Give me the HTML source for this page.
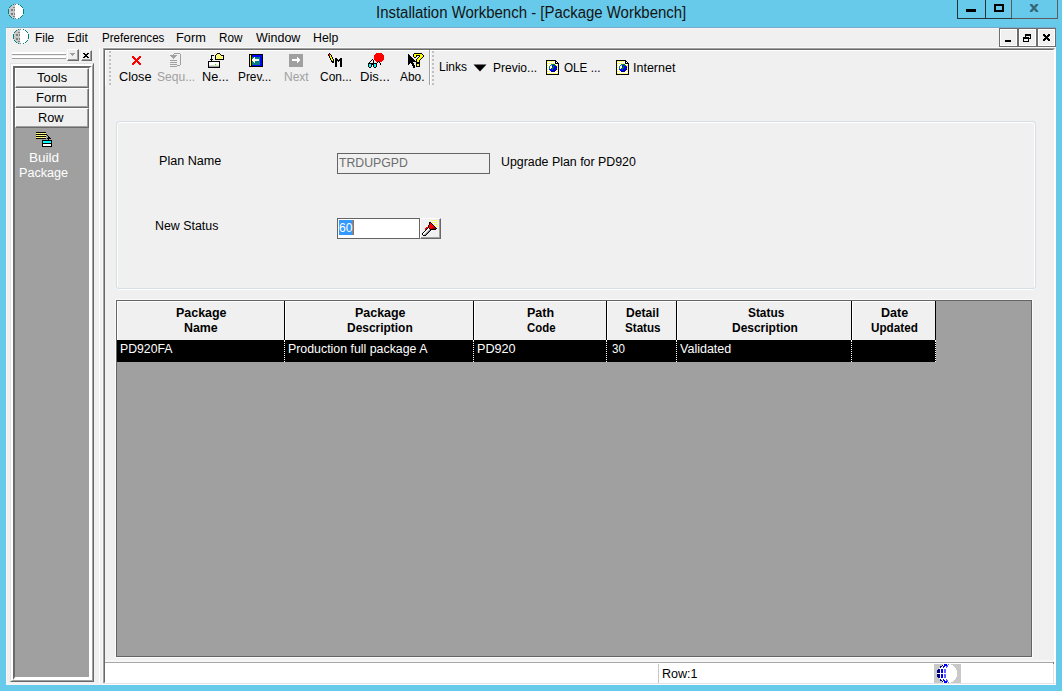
<!DOCTYPE html>
<html>
<head>
<meta charset="utf-8">
<title>Installation Workbench - [Package Workbench]</title>
<style>
html,body{margin:0;padding:0;}
body{width:1062px;height:691px;overflow:hidden;background:#67caea;position:relative;font-family:"Liberation Sans",sans-serif;font-size:12px;color:#000;}
.a{position:absolute;}
.t{position:absolute;white-space:nowrap;line-height:14px;font-size:12px;transform-origin:0 0;}
#client{left:6px;top:27px;width:1050px;height:658px;background:#f0f0f0;}
.title{font-size:16px;line-height:20px;color:#141414;}
.m{font-size:12px;}
.dis{color:#a0a0a0;}
.hdr{position:absolute;top:301px;height:39px;background:#f0f0f0;border-right:1px solid #000;box-sizing:border-box;box-shadow:inset 1px 1px 0 #fff;}
.hb{font-weight:bold;}
.cell{position:absolute;top:340px;height:22px;background:#000;border-right:1px dotted #fff;box-sizing:border-box;}
.sbtn{position:absolute;left:15px;width:74px;height:20px;background:#f0f0f0;border:1px solid;border-color:#fff #696969 #696969 #fff;box-sizing:border-box;box-shadow:inset -1px -1px 0 #a0a0a0;}
.mdib{top:28px;width:19px;height:19px;box-sizing:border-box;border:1px solid #6d6d6d;background:#f0f0f0;box-shadow:inset 0 0 0 1px #fff;}
.grip{width:2px;background:repeating-linear-gradient(to bottom,#c0c0c0 0,#c0c0c0 2px,#f0f0f0 2px,#f0f0f0 4px);}
</style>
</head>
<body>
<!-- title bar -->
<svg class="a" style="left:8px;top:4px" width="16" height="15" viewBox="0 0 16 15" shape-rendering="crispEdges"><rect x="5" y="0" width="1" height="1" fill="#008080"/><rect x="6" y="0" width="1" height="1" fill="#c8c8c8"/><rect x="7" y="0" width="1" height="1" fill="#808080"/><rect x="8" y="0" width="2" height="1" fill="#fff"/><rect x="10" y="0" width="1" height="1" fill="#008080"/><rect x="3" y="1" width="1" height="1" fill="#008080"/><rect x="4" y="1" width="3" height="1" fill="#c8c8c8"/><rect x="7" y="1" width="5" height="1" fill="#fff"/><rect x="12" y="1" width="1" height="1" fill="#008080"/><rect x="2" y="2" width="1" height="1" fill="#008080"/><rect x="3" y="2" width="4" height="1" fill="#c8c8c8"/><rect x="7" y="2" width="6" height="1" fill="#fff"/><rect x="13" y="2" width="1" height="1" fill="#008080"/><rect x="1" y="3" width="1" height="1" fill="#008080"/><rect x="2" y="3" width="3" height="1" fill="#c8c8c8"/><rect x="5" y="3" width="2" height="1" fill="#808080"/><rect x="7" y="3" width="7" height="1" fill="#fff"/><rect x="14" y="3" width="1" height="1" fill="#008080"/><rect x="1" y="4" width="6" height="1" fill="#c8c8c8"/><rect x="7" y="4" width="8" height="1" fill="#fff"/><rect x="0" y="5" width="1" height="1" fill="#008080"/><rect x="1" y="5" width="2" height="1" fill="#c8c8c8"/><rect x="3" y="5" width="2" height="1" fill="#808080"/><rect x="5" y="5" width="1" height="1" fill="#c8c8c8"/><rect x="6" y="5" width="1" height="1" fill="#808080"/><rect x="7" y="5" width="8" height="1" fill="#fff"/><rect x="15" y="5" width="1" height="1" fill="#008080"/><rect x="0" y="6" width="1" height="1" fill="#008080"/><rect x="1" y="6" width="2" height="1" fill="#c8c8c8"/><rect x="3" y="6" width="2" height="1" fill="#808080"/><rect x="5" y="6" width="1" height="1" fill="#c8c8c8"/><rect x="6" y="6" width="1" height="1" fill="#808080"/><rect x="7" y="6" width="8" height="1" fill="#fff"/><rect x="15" y="6" width="1" height="1" fill="#008080"/><rect x="0" y="7" width="1" height="1" fill="#008080"/><rect x="1" y="7" width="6" height="1" fill="#c8c8c8"/><rect x="7" y="7" width="8" height="1" fill="#fff"/><rect x="15" y="7" width="1" height="1" fill="#008080"/><rect x="0" y="8" width="1" height="1" fill="#008080"/><rect x="1" y="8" width="6" height="1" fill="#c8c8c8"/><rect x="7" y="8" width="8" height="1" fill="#fff"/><rect x="15" y="8" width="1" height="1" fill="#008080"/><rect x="0" y="9" width="1" height="1" fill="#008080"/><rect x="1" y="9" width="2" height="1" fill="#c8c8c8"/><rect x="3" y="9" width="2" height="1" fill="#808080"/><rect x="5" y="9" width="1" height="1" fill="#c8c8c8"/><rect x="6" y="9" width="1" height="1" fill="#808080"/><rect x="7" y="9" width="8" height="1" fill="#fff"/><rect x="15" y="9" width="1" height="1" fill="#008080"/><rect x="1" y="10" width="2" height="1" fill="#c8c8c8"/><rect x="3" y="10" width="2" height="1" fill="#808080"/><rect x="5" y="10" width="1" height="1" fill="#c8c8c8"/><rect x="6" y="10" width="1" height="1" fill="#808080"/><rect x="7" y="10" width="8" height="1" fill="#fff"/><rect x="1" y="11" width="1" height="1" fill="#008080"/><rect x="2" y="11" width="5" height="1" fill="#c8c8c8"/><rect x="7" y="11" width="7" height="1" fill="#fff"/><rect x="14" y="11" width="1" height="1" fill="#008080"/><rect x="2" y="12" width="1" height="1" fill="#008080"/><rect x="3" y="12" width="2" height="1" fill="#c8c8c8"/><rect x="5" y="12" width="2" height="1" fill="#808080"/><rect x="7" y="12" width="6" height="1" fill="#fff"/><rect x="13" y="12" width="1" height="1" fill="#008080"/><rect x="3" y="13" width="1" height="1" fill="#008080"/><rect x="4" y="13" width="3" height="1" fill="#c8c8c8"/><rect x="7" y="13" width="5" height="1" fill="#fff"/><rect x="12" y="13" width="1" height="1" fill="#008080"/><rect x="5" y="14" width="1" height="1" fill="#008080"/><rect x="6" y="14" width="1" height="1" fill="#c8c8c8"/><rect x="7" y="14" width="1" height="1" fill="#808080"/><rect x="8" y="14" width="2" height="1" fill="#fff"/><rect x="10" y="14" width="1" height="1" fill="#008080"/></svg>
<!-- caption buttons -->
<div class="a" style="left:957px;top:0;width:101px;height:19px;border:1px solid #5c5c5c;border-top:none;box-sizing:border-box;"></div>
<div class="a" style="left:957px;top:0;width:55px;height:19px;border:1px solid #26343a;border-top:none;border-right:none;box-sizing:border-box;"></div>
<div class="a" style="left:985px;top:0;width:1px;height:19px;background:#26343a"></div>
<div class="a" style="left:1011px;top:0;width:1px;height:18px;background:#5c5c5c"></div>
<div class="a" style="left:966px;top:9px;width:10px;height:3px;background:#000"></div>
<div class="a" style="left:994px;top:4px;width:10px;height:8px;border:2px solid #000;box-sizing:border-box;"></div>
<svg class="a" style="left:1029px;top:4px" width="10" height="8" viewBox="0 0 10 8"><path d="M1.400 0L8.600 8M8.600 0L1.400 8" stroke="#36697b" stroke-width="2.500" fill="none"/></svg>
<div id="client" class="a"></div>
<div class="a" style="left:6px;top:27px;width:1050px;height:1px;background:#74adcc"></div>
<div class="a" style="left:6px;top:28px;width:1050px;height:1px;background:#f8f6f4"></div>
<div class="a" style="left:6px;top:28px;width:1px;height:657px;background:#f8f6f4"></div>
<!-- menu bar -->
<svg class="a" style="left:13px;top:29px" width="16" height="15" viewBox="0 0 16 15" shape-rendering="crispEdges"><rect x="5" y="0" width="1" height="1" fill="#008080"/><rect x="6" y="0" width="1" height="1" fill="#c8c8c8"/><rect x="7" y="0" width="1" height="1" fill="#808080"/><rect x="8" y="0" width="2" height="1" fill="#fff"/><rect x="10" y="0" width="1" height="1" fill="#008080"/><rect x="3" y="1" width="1" height="1" fill="#008080"/><rect x="4" y="1" width="3" height="1" fill="#c8c8c8"/><rect x="7" y="1" width="5" height="1" fill="#fff"/><rect x="12" y="1" width="1" height="1" fill="#008080"/><rect x="2" y="2" width="1" height="1" fill="#008080"/><rect x="3" y="2" width="4" height="1" fill="#c8c8c8"/><rect x="7" y="2" width="6" height="1" fill="#fff"/><rect x="13" y="2" width="1" height="1" fill="#008080"/><rect x="1" y="3" width="1" height="1" fill="#008080"/><rect x="2" y="3" width="3" height="1" fill="#c8c8c8"/><rect x="5" y="3" width="2" height="1" fill="#808080"/><rect x="7" y="3" width="7" height="1" fill="#fff"/><rect x="14" y="3" width="1" height="1" fill="#008080"/><rect x="1" y="4" width="6" height="1" fill="#c8c8c8"/><rect x="7" y="4" width="8" height="1" fill="#fff"/><rect x="0" y="5" width="1" height="1" fill="#008080"/><rect x="1" y="5" width="2" height="1" fill="#c8c8c8"/><rect x="3" y="5" width="2" height="1" fill="#808080"/><rect x="5" y="5" width="1" height="1" fill="#c8c8c8"/><rect x="6" y="5" width="1" height="1" fill="#808080"/><rect x="7" y="5" width="8" height="1" fill="#fff"/><rect x="15" y="5" width="1" height="1" fill="#008080"/><rect x="0" y="6" width="1" height="1" fill="#008080"/><rect x="1" y="6" width="2" height="1" fill="#c8c8c8"/><rect x="3" y="6" width="2" height="1" fill="#808080"/><rect x="5" y="6" width="1" height="1" fill="#c8c8c8"/><rect x="6" y="6" width="1" height="1" fill="#808080"/><rect x="7" y="6" width="8" height="1" fill="#fff"/><rect x="15" y="6" width="1" height="1" fill="#008080"/><rect x="0" y="7" width="1" height="1" fill="#008080"/><rect x="1" y="7" width="6" height="1" fill="#c8c8c8"/><rect x="7" y="7" width="8" height="1" fill="#fff"/><rect x="15" y="7" width="1" height="1" fill="#008080"/><rect x="0" y="8" width="1" height="1" fill="#008080"/><rect x="1" y="8" width="6" height="1" fill="#c8c8c8"/><rect x="7" y="8" width="8" height="1" fill="#fff"/><rect x="15" y="8" width="1" height="1" fill="#008080"/><rect x="0" y="9" width="1" height="1" fill="#008080"/><rect x="1" y="9" width="2" height="1" fill="#c8c8c8"/><rect x="3" y="9" width="2" height="1" fill="#808080"/><rect x="5" y="9" width="1" height="1" fill="#c8c8c8"/><rect x="6" y="9" width="1" height="1" fill="#808080"/><rect x="7" y="9" width="8" height="1" fill="#fff"/><rect x="15" y="9" width="1" height="1" fill="#008080"/><rect x="1" y="10" width="2" height="1" fill="#c8c8c8"/><rect x="3" y="10" width="2" height="1" fill="#808080"/><rect x="5" y="10" width="1" height="1" fill="#c8c8c8"/><rect x="6" y="10" width="1" height="1" fill="#808080"/><rect x="7" y="10" width="8" height="1" fill="#fff"/><rect x="1" y="11" width="1" height="1" fill="#008080"/><rect x="2" y="11" width="5" height="1" fill="#c8c8c8"/><rect x="7" y="11" width="7" height="1" fill="#fff"/><rect x="14" y="11" width="1" height="1" fill="#008080"/><rect x="2" y="12" width="1" height="1" fill="#008080"/><rect x="3" y="12" width="2" height="1" fill="#c8c8c8"/><rect x="5" y="12" width="2" height="1" fill="#808080"/><rect x="7" y="12" width="6" height="1" fill="#fff"/><rect x="13" y="12" width="1" height="1" fill="#008080"/><rect x="3" y="13" width="1" height="1" fill="#008080"/><rect x="4" y="13" width="3" height="1" fill="#c8c8c8"/><rect x="7" y="13" width="5" height="1" fill="#fff"/><rect x="12" y="13" width="1" height="1" fill="#008080"/><rect x="5" y="14" width="1" height="1" fill="#008080"/><rect x="6" y="14" width="1" height="1" fill="#c8c8c8"/><rect x="7" y="14" width="1" height="1" fill="#808080"/><rect x="8" y="14" width="2" height="1" fill="#fff"/><rect x="10" y="14" width="1" height="1" fill="#008080"/></svg>
<!-- MDI child buttons -->
<div class="a mdib" style="left:999px"></div>
<div class="a mdib" style="left:1018px"></div>
<div class="a mdib" style="left:1037px"></div>
<div class="a" style="left:1005px;top:40px;width:6px;height:2px;background:#000"></div>
<svg class="a" style="left:1023px;top:34px" width="8" height="8" viewBox="0 0 8 8" shape-rendering="crispEdges"><rect x="2" y="0" width="6" height="2" fill="#000"/><rect x="7" y="0" width="1" height="5" fill="#000"/><rect x="6" y="4" width="2" height="1" fill="#000"/><rect x="2" y="0" width="1" height="3" fill="#000"/><rect x="0" y="3" width="6" height="2" fill="#000"/><rect x="0" y="3" width="1" height="5" fill="#000"/><rect x="5" y="3" width="1" height="5" fill="#000"/><rect x="0" y="7" width="6" height="1" fill="#000"/></svg>
<svg class="a" style="left:1043px;top:34px" width="7" height="7" viewBox="0 0 7 7" shape-rendering="crispEdges"><rect x="0" y="0" width="2" height="1" fill="#000"/><rect x="5" y="0" width="2" height="1" fill="#000"/><rect x="0" y="1" width="3" height="1" fill="#000"/><rect x="4" y="1" width="3" height="1" fill="#000"/><rect x="1" y="2" width="5" height="1" fill="#000"/><rect x="2" y="3" width="3" height="1" fill="#000"/><rect x="1" y="4" width="5" height="1" fill="#000"/><rect x="0" y="5" width="3" height="1" fill="#000"/><rect x="4" y="5" width="3" height="1" fill="#000"/><rect x="0" y="6" width="2" height="1" fill="#000"/><rect x="5" y="6" width="2" height="1" fill="#000"/></svg>
<!-- left toolbar gripper -->
<div class="a" style="left:12px;top:52px;width:54px;height:2px;background:#fff"></div>
<div class="a" style="left:12px;top:54px;width:54px;height:1px;background:#a0a0a0"></div>
<div class="a" style="left:12px;top:56px;width:54px;height:2px;background:#fff"></div>
<div class="a" style="left:12px;top:58px;width:54px;height:1px;background:#a0a0a0"></div>
<div class="a" style="left:67px;top:49px;width:12px;height:12px;box-sizing:border-box;border:1px solid;border-color:#fff #696969 #696969 #fff;background:#f0f0f0;box-shadow:inset -1px -1px 0 #a0a0a0"></div>
<svg class="a" style="left:70px;top:53px" width="5" height="3" viewBox="0 0 5 3" shape-rendering="crispEdges"><rect x="0" y="0" width="5" height="1" fill="#a0a0a0"/><rect x="1" y="1" width="3" height="1" fill="#a0a0a0"/><rect x="2" y="2" width="1" height="1" fill="#a0a0a0"/></svg>
<div class="a" style="left:81px;top:50px;width:11px;height:11px;box-sizing:border-box;border:1px solid;border-color:#fff #696969 #696969 #fff;background:#f0f0f0;box-shadow:inset -1px -1px 0 #a0a0a0"></div>
<svg class="a" style="left:83px;top:53px" width="6" height="5" viewBox="0 0 6 5" shape-rendering="crispEdges"><rect x="0" y="0" width="2" height="1" fill="#000"/><rect x="4" y="0" width="2" height="1" fill="#000"/><rect x="1" y="1" width="4" height="1" fill="#000"/><rect x="2" y="2" width="2" height="1" fill="#000"/><rect x="1" y="3" width="4" height="1" fill="#000"/><rect x="0" y="4" width="2" height="1" fill="#000"/><rect x="4" y="4" width="2" height="1" fill="#000"/></svg>
<!-- side panel -->
<div class="a" style="left:10px;top:63px;width:84px;height:619px;box-sizing:border-box;border:1px solid;border-color:#e3e3e3 #696969 #696969 #e3e3e3;background:#f0f0f0"></div>
<div class="a" style="left:11px;top:64px;width:82px;height:617px;box-sizing:border-box;border:2px solid;border-color:#fff #a0a0a0 #a0a0a0 #fff;border-right-width:1px;border-bottom-width:1px;background:#f0f0f0"></div>
<div class="a" style="left:13px;top:66px;width:79px;height:614px;box-sizing:border-box;border:2px solid;border-color:#696969 #fff #fff #696969;border-right-width:3px;border-bottom-width:3px;background:#a0a0a0"></div>
<div class="sbtn" style="top:68px"></div>
<div class="sbtn" style="top:88px"></div>
<div class="sbtn" style="top:108px"></div>
<svg class="a" style="left:36px;top:132px" width="16" height="15" viewBox="0 0 16 15" shape-rendering="crispEdges"><rect x="0" y="0" width="10" height="1" fill="#000"/><rect x="0" y="1" width="1" height="1" fill="#ffff00"/><rect x="1" y="1" width="1" height="1" fill="#fff"/><rect x="2" y="1" width="1" height="1" fill="#ffff00"/><rect x="3" y="1" width="1" height="1" fill="#fff"/><rect x="4" y="1" width="1" height="1" fill="#ffff00"/><rect x="5" y="1" width="1" height="1" fill="#fff"/><rect x="6" y="1" width="1" height="1" fill="#ffff00"/><rect x="7" y="1" width="1" height="1" fill="#fff"/><rect x="8" y="1" width="1" height="1" fill="#ffff00"/><rect x="9" y="1" width="1" height="1" fill="#fff"/><rect x="0" y="2" width="11" height="1" fill="#000"/><rect x="0" y="3" width="1" height="1" fill="#ffff00"/><rect x="1" y="3" width="1" height="1" fill="#fff"/><rect x="2" y="3" width="1" height="1" fill="#ffff00"/><rect x="3" y="3" width="1" height="1" fill="#fff"/><rect x="4" y="3" width="1" height="1" fill="#ffff00"/><rect x="5" y="3" width="1" height="1" fill="#fff"/><rect x="6" y="3" width="1" height="1" fill="#ffff00"/><rect x="7" y="3" width="1" height="1" fill="#fff"/><rect x="8" y="3" width="1" height="1" fill="#ffff00"/><rect x="9" y="3" width="1" height="1" fill="#fff"/><rect x="11" y="3" width="1" height="1" fill="#000"/><rect x="0" y="4" width="10" height="1" fill="#000"/><rect x="12" y="4" width="1" height="1" fill="#000"/><rect x="0" y="5" width="1" height="1" fill="#ffff00"/><rect x="1" y="5" width="1" height="1" fill="#fff"/><rect x="2" y="5" width="1" height="1" fill="#ffff00"/><rect x="3" y="5" width="1" height="1" fill="#fff"/><rect x="4" y="5" width="1" height="1" fill="#ffff00"/><rect x="5" y="5" width="1" height="1" fill="#fff"/><rect x="6" y="5" width="1" height="1" fill="#ffff00"/><rect x="7" y="5" width="1" height="1" fill="#fff"/><rect x="8" y="5" width="1" height="1" fill="#ffff00"/><rect x="9" y="5" width="1" height="1" fill="#fff"/><rect x="12" y="5" width="2" height="1" fill="#000"/><rect x="0" y="6" width="10" height="1" fill="#000"/><rect x="11" y="6" width="4" height="1" fill="#000"/><rect x="12" y="7" width="1" height="1" fill="#000"/><rect x="6" y="8" width="10" height="1" fill="#000"/><rect x="6" y="9" width="1" height="1" fill="#000"/><rect x="7" y="9" width="8" height="1" fill="#00ffff"/><rect x="15" y="9" width="1" height="1" fill="#000"/><rect x="6" y="10" width="1" height="1" fill="#000"/><rect x="7" y="10" width="8" height="1" fill="#00ffff"/><rect x="15" y="10" width="1" height="1" fill="#000"/><rect x="6" y="11" width="10" height="1" fill="#000"/><rect x="6" y="12" width="1" height="1" fill="#000"/><rect x="7" y="12" width="8" height="1" fill="#fff"/><rect x="15" y="12" width="1" height="1" fill="#000"/><rect x="6" y="13" width="1" height="1" fill="#000"/><rect x="7" y="13" width="8" height="1" fill="#fff"/><rect x="15" y="13" width="1" height="1" fill="#000"/><rect x="6" y="14" width="10" height="1" fill="#000"/></svg>
<!-- splitter highlight -->
<div class="a" style="left:99px;top:48px;width:1px;height:636px;background:#fff"></div>
<div class="a" style="left:102px;top:48px;width:1px;height:636px;background:#f8f8f8"></div>
<!-- MDI client border -->
<div class="a" style="left:103px;top:47px;width:953px;height:1px;background:#fafafa"></div>
<div class="a" style="left:103px;top:48px;width:952px;height:636px;box-sizing:border-box;border:1px solid;border-color:#a0a0a0 transparent transparent #a0a0a0"></div>
<div class="a" style="left:104px;top:49px;width:950px;height:634px;box-sizing:border-box;border:1px solid;border-color:#696969 transparent transparent #696969"></div>
<div class="a" style="left:105px;top:50px;width:949px;height:1px;background:#fff"></div>
<div class="a" style="left:105px;top:50px;width:1px;height:36px;background:#fff"></div>
<div class="a" style="left:1054px;top:50px;width:2px;height:634px;background:#fff"></div>
<div class="a" style="left:6px;top:683px;width:1050px;height:2px;background:#f4f4f4"></div>
<div class="a" style="left:103px;top:683px;width:952px;height:1px;background:#e3e3e3"></div>
<div class="a" style="left:103px;top:684px;width:953px;height:1px;background:#fff"></div>
<div class="a" style="left:1053px;top:663px;width:1px;height:21px;background:#e3e3e3"></div>
<!-- toolbar -->
<div class="a grip" style="left:109px;top:51px;height:34px"></div>
<div class="a" style="left:429px;top:50px;width:1px;height:35px;background:#a0a0a0"></div>
<div class="a" style="left:430px;top:50px;width:1px;height:35px;background:#fff"></div>
<div class="a grip" style="left:432px;top:51px;height:34px"></div>
<svg class="a" style="left:132px;top:56px" width="9" height="9" viewBox="0 0 9 9" shape-rendering="crispEdges"><rect x="0" y="0" width="2" height="1" fill="#ff0000"/><rect x="7" y="0" width="2" height="1" fill="#ff0000"/><rect x="0" y="1" width="3" height="1" fill="#ff0000"/><rect x="6" y="1" width="3" height="1" fill="#ff0000"/><rect x="1" y="2" width="3" height="1" fill="#ff0000"/><rect x="5" y="2" width="3" height="1" fill="#ff0000"/><rect x="2" y="3" width="5" height="1" fill="#ff0000"/><rect x="3" y="4" width="3" height="1" fill="#ff0000"/><rect x="2" y="5" width="5" height="1" fill="#ff0000"/><rect x="1" y="6" width="3" height="1" fill="#ff0000"/><rect x="5" y="6" width="3" height="1" fill="#ff0000"/><rect x="0" y="7" width="3" height="1" fill="#ff0000"/><rect x="6" y="7" width="3" height="1" fill="#ff0000"/><rect x="0" y="8" width="2" height="1" fill="#ff0000"/><rect x="7" y="8" width="2" height="1" fill="#ff0000"/></svg>
<svg class="a" style="left:170px;top:53px" width="12" height="14" viewBox="0 0 12 14" shape-rendering="crispEdges"><rect x="4" y="0" width="6" height="1" fill="#a0a0a0"/><rect x="3" y="1" width="1" height="1" fill="#a0a0a0"/><rect x="10" y="1" width="1" height="1" fill="#a0a0a0"/><rect x="0" y="2" width="7" height="1" fill="#a0a0a0"/><rect x="10" y="2" width="1" height="1" fill="#a0a0a0"/><rect x="1" y="3" width="5" height="1" fill="#a0a0a0"/><rect x="10" y="3" width="1" height="1" fill="#a0a0a0"/><rect x="2" y="4" width="3" height="1" fill="#a0a0a0"/><rect x="10" y="4" width="1" height="1" fill="#a0a0a0"/><rect x="3" y="5" width="1" height="1" fill="#a0a0a0"/><rect x="10" y="5" width="1" height="1" fill="#a0a0a0"/><rect x="10" y="6" width="1" height="1" fill="#a0a0a0"/><rect x="0" y="7" width="7" height="1" fill="#a0a0a0"/><rect x="10" y="7" width="1" height="1" fill="#a0a0a0"/><rect x="10" y="8" width="1" height="1" fill="#a0a0a0"/><rect x="0" y="9" width="7" height="1" fill="#a0a0a0"/><rect x="10" y="9" width="1" height="1" fill="#a0a0a0"/><rect x="10" y="10" width="1" height="1" fill="#a0a0a0"/><rect x="0" y="11" width="7" height="1" fill="#a0a0a0"/><rect x="10" y="11" width="1" height="1" fill="#a0a0a0"/><rect x="7" y="12" width="3" height="1" fill="#a0a0a0"/><rect x="0" y="13" width="7" height="1" fill="#a0a0a0"/></svg>
<svg class="a" style="left:208px;top:53px" width="17" height="15" viewBox="0 0 17 15" shape-rendering="crispEdges"><rect x="9" y="0" width="3" height="1" fill="#000"/><rect x="8" y="1" width="1" height="1" fill="#000"/><rect x="9" y="1" width="1" height="1" fill="#ffff00"/><rect x="10" y="1" width="1" height="1" fill="#fff"/><rect x="11" y="1" width="1" height="1" fill="#ffff00"/><rect x="12" y="1" width="1" height="1" fill="#000"/><rect x="3" y="2" width="3" height="1" fill="#000"/><rect x="7" y="2" width="1" height="1" fill="#000"/><rect x="8" y="2" width="1" height="1" fill="#ffff00"/><rect x="9" y="2" width="1" height="1" fill="#fff"/><rect x="10" y="2" width="1" height="1" fill="#ffff00"/><rect x="11" y="2" width="1" height="1" fill="#fff"/><rect x="12" y="2" width="1" height="1" fill="#ffff00"/><rect x="13" y="2" width="3" height="1" fill="#000"/><rect x="3" y="3" width="1" height="1" fill="#000"/><rect x="7" y="3" width="1" height="1" fill="#000"/><rect x="8" y="3" width="1" height="1" fill="#fff"/><rect x="9" y="3" width="1" height="1" fill="#ffff00"/><rect x="10" y="3" width="1" height="1" fill="#fff"/><rect x="11" y="3" width="1" height="1" fill="#ffff00"/><rect x="12" y="3" width="1" height="1" fill="#fff"/><rect x="13" y="3" width="1" height="1" fill="#ffff00"/><rect x="14" y="3" width="1" height="1" fill="#fff"/><rect x="15" y="3" width="1" height="1" fill="#000"/><rect x="3" y="4" width="1" height="1" fill="#000"/><rect x="7" y="4" width="1" height="1" fill="#000"/><rect x="8" y="4" width="1" height="1" fill="#ffff00"/><rect x="9" y="4" width="1" height="1" fill="#fff"/><rect x="10" y="4" width="1" height="1" fill="#ffff00"/><rect x="11" y="4" width="1" height="1" fill="#fff"/><rect x="12" y="4" width="1" height="1" fill="#ffff00"/><rect x="13" y="4" width="1" height="1" fill="#fff"/><rect x="14" y="4" width="1" height="1" fill="#ffff00"/><rect x="15" y="4" width="1" height="1" fill="#000"/><rect x="3" y="5" width="1" height="1" fill="#000"/><rect x="7" y="5" width="1" height="1" fill="#000"/><rect x="8" y="5" width="1" height="1" fill="#fff"/><rect x="9" y="5" width="1" height="1" fill="#ffff00"/><rect x="10" y="5" width="1" height="1" fill="#fff"/><rect x="11" y="5" width="1" height="1" fill="#ffff00"/><rect x="12" y="5" width="1" height="1" fill="#fff"/><rect x="13" y="5" width="1" height="1" fill="#ffff00"/><rect x="14" y="5" width="1" height="1" fill="#fff"/><rect x="15" y="5" width="1" height="1" fill="#000"/><rect x="2" y="6" width="3" height="1" fill="#000"/><rect x="7" y="6" width="9" height="1" fill="#000"/><rect x="3" y="7" width="1" height="1" fill="#000"/><rect x="0" y="8" width="12" height="1" fill="#000"/><rect x="0" y="9" width="1" height="1" fill="#000"/><rect x="1" y="9" width="10" height="1" fill="#fff"/><rect x="11" y="9" width="1" height="1" fill="#000"/><rect x="0" y="10" width="1" height="1" fill="#000"/><rect x="1" y="10" width="10" height="1" fill="#fff"/><rect x="11" y="10" width="1" height="1" fill="#000"/><rect x="0" y="11" width="1" height="1" fill="#000"/><rect x="1" y="11" width="6" height="1" fill="#fff"/><rect x="7" y="11" width="1" height="1" fill="#00ff00"/><rect x="8" y="11" width="1" height="1" fill="#ffff80"/><rect x="9" y="11" width="2" height="1" fill="#fff"/><rect x="11" y="11" width="1" height="1" fill="#000"/><rect x="0" y="12" width="1" height="1" fill="#000"/><rect x="1" y="12" width="10" height="1" fill="#dcdcdc"/><rect x="11" y="12" width="1" height="1" fill="#000"/><rect x="0" y="13" width="1" height="1" fill="#000"/><rect x="1" y="13" width="10" height="1" fill="#a0a0a0"/><rect x="11" y="13" width="1" height="1" fill="#000"/><rect x="0" y="14" width="12" height="1" fill="#000"/></svg>
<svg class="a" style="left:249px;top:54px" width="14" height="13" viewBox="0 0 14 13" shape-rendering="crispEdges"><rect x="0" y="0" width="14" height="1" fill="#000"/><rect x="0" y="1" width="1" height="1" fill="#000"/><rect x="1" y="1" width="1" height="1" fill="#ffff00"/><rect x="2" y="1" width="1" height="1" fill="#000"/><rect x="3" y="1" width="10" height="1" fill="#0000ff"/><rect x="13" y="1" width="1" height="1" fill="#000"/><rect x="0" y="2" width="1" height="1" fill="#000"/><rect x="1" y="2" width="1" height="1" fill="#ffff00"/><rect x="2" y="2" width="1" height="1" fill="#000"/><rect x="3" y="2" width="10" height="1" fill="#0000ff"/><rect x="13" y="2" width="1" height="1" fill="#000"/><rect x="0" y="3" width="1" height="1" fill="#000"/><rect x="1" y="3" width="1" height="1" fill="#ffff00"/><rect x="2" y="3" width="1" height="1" fill="#000"/><rect x="3" y="3" width="2" height="1" fill="#008080"/><rect x="5" y="3" width="1" height="1" fill="#fff"/><rect x="6" y="3" width="5" height="1" fill="#008080"/><rect x="11" y="3" width="2" height="1" fill="#0000ff"/><rect x="13" y="3" width="1" height="1" fill="#000"/><rect x="0" y="4" width="1" height="1" fill="#000"/><rect x="1" y="4" width="1" height="1" fill="#ffff00"/><rect x="2" y="4" width="1" height="1" fill="#000"/><rect x="3" y="4" width="1" height="1" fill="#008080"/><rect x="4" y="4" width="2" height="1" fill="#fff"/><rect x="6" y="4" width="5" height="1" fill="#008080"/><rect x="11" y="4" width="2" height="1" fill="#0000ff"/><rect x="13" y="4" width="1" height="1" fill="#000"/><rect x="0" y="5" width="1" height="1" fill="#000"/><rect x="1" y="5" width="1" height="1" fill="#ffff00"/><rect x="2" y="5" width="1" height="1" fill="#000"/><rect x="3" y="5" width="7" height="1" fill="#fff"/><rect x="10" y="5" width="1" height="1" fill="#008080"/><rect x="11" y="5" width="2" height="1" fill="#0000ff"/><rect x="13" y="5" width="1" height="1" fill="#000"/><rect x="0" y="6" width="1" height="1" fill="#000"/><rect x="1" y="6" width="1" height="1" fill="#ffff00"/><rect x="2" y="6" width="1" height="1" fill="#000"/><rect x="3" y="6" width="7" height="1" fill="#fff"/><rect x="10" y="6" width="1" height="1" fill="#008080"/><rect x="11" y="6" width="2" height="1" fill="#0000ff"/><rect x="13" y="6" width="1" height="1" fill="#000"/><rect x="0" y="7" width="1" height="1" fill="#000"/><rect x="1" y="7" width="1" height="1" fill="#ffff00"/><rect x="2" y="7" width="1" height="1" fill="#000"/><rect x="3" y="7" width="1" height="1" fill="#008080"/><rect x="4" y="7" width="2" height="1" fill="#fff"/><rect x="6" y="7" width="5" height="1" fill="#008080"/><rect x="11" y="7" width="2" height="1" fill="#0000ff"/><rect x="13" y="7" width="1" height="1" fill="#000"/><rect x="0" y="8" width="1" height="1" fill="#000"/><rect x="1" y="8" width="1" height="1" fill="#ffff00"/><rect x="2" y="8" width="1" height="1" fill="#000"/><rect x="3" y="8" width="2" height="1" fill="#008080"/><rect x="5" y="8" width="1" height="1" fill="#fff"/><rect x="6" y="8" width="5" height="1" fill="#008080"/><rect x="11" y="8" width="2" height="1" fill="#0000ff"/><rect x="13" y="8" width="1" height="1" fill="#000"/><rect x="0" y="9" width="1" height="1" fill="#000"/><rect x="1" y="9" width="1" height="1" fill="#ffff00"/><rect x="2" y="9" width="1" height="1" fill="#000"/><rect x="3" y="9" width="8" height="1" fill="#008080"/><rect x="11" y="9" width="2" height="1" fill="#0000ff"/><rect x="13" y="9" width="1" height="1" fill="#000"/><rect x="0" y="10" width="1" height="1" fill="#000"/><rect x="1" y="10" width="1" height="1" fill="#ffff00"/><rect x="2" y="10" width="1" height="1" fill="#000"/><rect x="3" y="10" width="8" height="1" fill="#008080"/><rect x="11" y="10" width="2" height="1" fill="#0000ff"/><rect x="13" y="10" width="1" height="1" fill="#000"/><rect x="0" y="11" width="1" height="1" fill="#000"/><rect x="1" y="11" width="1" height="1" fill="#ffff00"/><rect x="2" y="11" width="1" height="1" fill="#000"/><rect x="3" y="11" width="10" height="1" fill="#0000ff"/><rect x="13" y="11" width="1" height="1" fill="#000"/><rect x="0" y="12" width="14" height="1" fill="#000"/></svg>
<svg class="a" style="left:289px;top:54px" width="14" height="13" viewBox="0 0 14 13" shape-rendering="crispEdges"><rect x="0" y="0" width="14" height="1" fill="#a0a0a0"/><rect x="0" y="1" width="14" height="1" fill="#a0a0a0"/><rect x="0" y="2" width="14" height="1" fill="#a0a0a0"/><rect x="0" y="3" width="8" height="1" fill="#a0a0a0"/><rect x="8" y="3" width="1" height="1" fill="#fff"/><rect x="9" y="3" width="5" height="1" fill="#a0a0a0"/><rect x="0" y="4" width="8" height="1" fill="#a0a0a0"/><rect x="8" y="4" width="2" height="1" fill="#fff"/><rect x="10" y="4" width="4" height="1" fill="#a0a0a0"/><rect x="0" y="5" width="3" height="1" fill="#a0a0a0"/><rect x="3" y="5" width="8" height="1" fill="#fff"/><rect x="11" y="5" width="3" height="1" fill="#a0a0a0"/><rect x="0" y="6" width="3" height="1" fill="#a0a0a0"/><rect x="3" y="6" width="8" height="1" fill="#fff"/><rect x="11" y="6" width="3" height="1" fill="#a0a0a0"/><rect x="0" y="7" width="8" height="1" fill="#a0a0a0"/><rect x="8" y="7" width="2" height="1" fill="#fff"/><rect x="10" y="7" width="4" height="1" fill="#a0a0a0"/><rect x="0" y="8" width="8" height="1" fill="#a0a0a0"/><rect x="8" y="8" width="1" height="1" fill="#fff"/><rect x="9" y="8" width="5" height="1" fill="#a0a0a0"/><rect x="0" y="9" width="14" height="1" fill="#a0a0a0"/><rect x="0" y="10" width="14" height="1" fill="#a0a0a0"/><rect x="0" y="11" width="14" height="1" fill="#a0a0a0"/><rect x="0" y="12" width="14" height="1" fill="#a0a0a0"/></svg>
<svg class="a" style="left:328px;top:53px" width="15" height="14" viewBox="0 0 15 14" shape-rendering="crispEdges"><rect x="1" y="0" width="1" height="1" fill="#000"/><rect x="0" y="1" width="1" height="1" fill="#000"/><rect x="1" y="1" width="1" height="1" fill="#ff0000"/><rect x="2" y="1" width="1" height="1" fill="#000"/><rect x="0" y="2" width="1" height="1" fill="#000"/><rect x="1" y="2" width="1" height="1" fill="#ff0000"/><rect x="2" y="2" width="1" height="1" fill="#ffff00"/><rect x="3" y="2" width="1" height="1" fill="#000"/><rect x="1" y="3" width="1" height="1" fill="#000"/><rect x="2" y="3" width="1" height="1" fill="#ffff00"/><rect x="3" y="3" width="1" height="1" fill="#000"/><rect x="1" y="4" width="1" height="1" fill="#000"/><rect x="2" y="4" width="2" height="1" fill="#ffff00"/><rect x="4" y="4" width="1" height="1" fill="#000"/><rect x="2" y="5" width="1" height="1" fill="#000"/><rect x="3" y="5" width="1" height="1" fill="#ffff00"/><rect x="4" y="5" width="1" height="1" fill="#000"/><rect x="7" y="5" width="2" height="1" fill="#000"/><rect x="12" y="5" width="2" height="1" fill="#000"/><rect x="2" y="6" width="1" height="1" fill="#000"/><rect x="3" y="6" width="2" height="1" fill="#ffff00"/><rect x="5" y="6" width="1" height="1" fill="#000"/><rect x="7" y="6" width="3" height="1" fill="#000"/><rect x="11" y="6" width="3" height="1" fill="#000"/><rect x="3" y="7" width="1" height="1" fill="#000"/><rect x="4" y="7" width="1" height="1" fill="#ffff00"/><rect x="5" y="7" width="1" height="1" fill="#000"/><rect x="7" y="7" width="7" height="1" fill="#000"/><rect x="3" y="8" width="3" height="1" fill="#000"/><rect x="7" y="8" width="2" height="1" fill="#000"/><rect x="10" y="8" width="1" height="1" fill="#000"/><rect x="12" y="8" width="2" height="1" fill="#000"/><rect x="4" y="9" width="2" height="1" fill="#000"/><rect x="7" y="9" width="2" height="1" fill="#000"/><rect x="12" y="9" width="2" height="1" fill="#000"/><rect x="7" y="10" width="2" height="1" fill="#000"/><rect x="12" y="10" width="2" height="1" fill="#000"/><rect x="7" y="11" width="2" height="1" fill="#000"/><rect x="12" y="11" width="2" height="1" fill="#000"/><rect x="7" y="12" width="2" height="1" fill="#000"/><rect x="12" y="12" width="2" height="1" fill="#000"/><rect x="7" y="13" width="2" height="1" fill="#000"/><rect x="12" y="13" width="2" height="1" fill="#000"/></svg>
<svg class="a" style="left:368px;top:53px" width="17" height="15" viewBox="0 0 17 15" shape-rendering="crispEdges"><rect x="8" y="0" width="6" height="1" fill="#ff0000"/><rect x="7" y="1" width="8" height="1" fill="#ff0000"/><rect x="6" y="2" width="10" height="1" fill="#ff0000"/><rect x="6" y="3" width="10" height="1" fill="#ff0000"/><rect x="6" y="4" width="10" height="1" fill="#ff0000"/><rect x="6" y="5" width="10" height="1" fill="#ff0000"/><rect x="4" y="6" width="1" height="1" fill="#000"/><rect x="6" y="6" width="10" height="1" fill="#ff0000"/><rect x="3" y="7" width="1" height="1" fill="#000"/><rect x="5" y="7" width="1" height="1" fill="#000"/><rect x="7" y="7" width="8" height="1" fill="#ff0000"/><rect x="2" y="8" width="1" height="1" fill="#000"/><rect x="5" y="8" width="1" height="1" fill="#000"/><rect x="8" y="8" width="2" height="1" fill="#ff0000"/><rect x="10" y="8" width="1" height="1" fill="#000"/><rect x="11" y="8" width="3" height="1" fill="#ff0000"/><rect x="1" y="9" width="1" height="1" fill="#000"/><rect x="5" y="9" width="1" height="1" fill="#000"/><rect x="9" y="9" width="1" height="1" fill="#000"/><rect x="11" y="9" width="1" height="1" fill="#000"/><rect x="0" y="10" width="9" height="1" fill="#000"/><rect x="12" y="10" width="1" height="1" fill="#000"/><rect x="0" y="11" width="1" height="1" fill="#000"/><rect x="1" y="11" width="2" height="1" fill="#00ffff"/><rect x="3" y="11" width="3" height="1" fill="#000"/><rect x="6" y="11" width="2" height="1" fill="#00ffff"/><rect x="8" y="11" width="1" height="1" fill="#000"/><rect x="12" y="11" width="1" height="1" fill="#000"/><rect x="0" y="12" width="1" height="1" fill="#000"/><rect x="1" y="12" width="2" height="1" fill="#00ffff"/><rect x="3" y="12" width="1" height="1" fill="#000"/><rect x="5" y="12" width="1" height="1" fill="#000"/><rect x="6" y="12" width="2" height="1" fill="#00ffff"/><rect x="8" y="12" width="1" height="1" fill="#000"/><rect x="0" y="13" width="1" height="1" fill="#000"/><rect x="1" y="13" width="2" height="1" fill="#00ffff"/><rect x="3" y="13" width="1" height="1" fill="#000"/><rect x="5" y="13" width="1" height="1" fill="#000"/><rect x="6" y="13" width="2" height="1" fill="#00ffff"/><rect x="8" y="13" width="1" height="1" fill="#000"/><rect x="1" y="14" width="2" height="1" fill="#000"/><rect x="6" y="14" width="2" height="1" fill="#000"/></svg>
<svg class="a" style="left:408px;top:53px" width="16" height="15" viewBox="0 0 16 15" shape-rendering="crispEdges"><rect x="6" y="0" width="8" height="1" fill="#000"/><rect x="0" y="1" width="1" height="1" fill="#000"/><rect x="5" y="1" width="1" height="1" fill="#000"/><rect x="6" y="1" width="8" height="1" fill="#ffff00"/><rect x="14" y="1" width="1" height="1" fill="#000"/><rect x="0" y="2" width="2" height="1" fill="#000"/><rect x="5" y="2" width="1" height="1" fill="#000"/><rect x="6" y="2" width="2" height="1" fill="#ffff00"/><rect x="8" y="2" width="4" height="1" fill="#000"/><rect x="12" y="2" width="3" height="1" fill="#ffff00"/><rect x="15" y="2" width="1" height="1" fill="#000"/><rect x="0" y="3" width="3" height="1" fill="#000"/><rect x="5" y="3" width="1" height="1" fill="#000"/><rect x="6" y="3" width="2" height="1" fill="#ffff00"/><rect x="8" y="3" width="1" height="1" fill="#000"/><rect x="11" y="3" width="1" height="1" fill="#000"/><rect x="12" y="3" width="3" height="1" fill="#ffff00"/><rect x="15" y="3" width="1" height="1" fill="#000"/><rect x="0" y="4" width="4" height="1" fill="#000"/><rect x="6" y="4" width="2" height="1" fill="#000"/><rect x="10" y="4" width="1" height="1" fill="#000"/><rect x="11" y="4" width="3" height="1" fill="#ffff00"/><rect x="14" y="4" width="1" height="1" fill="#000"/><rect x="0" y="5" width="5" height="1" fill="#000"/><rect x="9" y="5" width="1" height="1" fill="#000"/><rect x="10" y="5" width="3" height="1" fill="#ffff00"/><rect x="13" y="5" width="1" height="1" fill="#000"/><rect x="0" y="6" width="6" height="1" fill="#000"/><rect x="8" y="6" width="1" height="1" fill="#000"/><rect x="9" y="6" width="3" height="1" fill="#ffff00"/><rect x="12" y="6" width="1" height="1" fill="#000"/><rect x="0" y="7" width="7" height="1" fill="#000"/><rect x="8" y="7" width="1" height="1" fill="#000"/><rect x="9" y="7" width="2" height="1" fill="#ffff00"/><rect x="11" y="7" width="1" height="1" fill="#000"/><rect x="0" y="8" width="9" height="1" fill="#000"/><rect x="9" y="8" width="2" height="1" fill="#ffff00"/><rect x="11" y="8" width="1" height="1" fill="#000"/><rect x="0" y="9" width="5" height="1" fill="#000"/><rect x="8" y="9" width="4" height="1" fill="#000"/><rect x="0" y="10" width="2" height="1" fill="#000"/><rect x="3" y="10" width="3" height="1" fill="#000"/><rect x="8" y="10" width="4" height="1" fill="#000"/><rect x="0" y="11" width="1" height="1" fill="#000"/><rect x="4" y="11" width="2" height="1" fill="#000"/><rect x="8" y="11" width="1" height="1" fill="#000"/><rect x="9" y="11" width="2" height="1" fill="#ffff00"/><rect x="11" y="11" width="1" height="1" fill="#000"/><rect x="4" y="12" width="3" height="1" fill="#000"/><rect x="8" y="12" width="1" height="1" fill="#000"/><rect x="9" y="12" width="2" height="1" fill="#ffff00"/><rect x="11" y="12" width="1" height="1" fill="#000"/><rect x="5" y="13" width="2" height="1" fill="#000"/><rect x="8" y="13" width="4" height="1" fill="#000"/><rect x="5" y="14" width="2" height="1" fill="#000"/></svg>
<svg class="a" style="left:546px;top:60px" width="13" height="15" viewBox="0 0 13 15" shape-rendering="crispEdges"><rect x="0" y="0" width="10" height="1" fill="#000"/><rect x="0" y="1" width="1" height="1" fill="#000"/><rect x="1" y="1" width="1" height="1" fill="#ffff00"/><rect x="2" y="1" width="1" height="1" fill="#fff"/><rect x="3" y="1" width="1" height="1" fill="#ffff00"/><rect x="4" y="1" width="1" height="1" fill="#fff"/><rect x="5" y="1" width="1" height="1" fill="#ffff00"/><rect x="6" y="1" width="1" height="1" fill="#fff"/><rect x="7" y="1" width="1" height="1" fill="#ffff00"/><rect x="8" y="1" width="1" height="1" fill="#fff"/><rect x="9" y="1" width="2" height="1" fill="#000"/><rect x="0" y="2" width="1" height="1" fill="#000"/><rect x="1" y="2" width="8" height="1" fill="#fff"/><rect x="9" y="2" width="1" height="1" fill="#000"/><rect x="10" y="2" width="1" height="1" fill="#fff"/><rect x="11" y="2" width="1" height="1" fill="#000"/><rect x="0" y="3" width="1" height="1" fill="#000"/><rect x="1" y="3" width="1" height="1" fill="#ffff00"/><rect x="2" y="3" width="1" height="1" fill="#fff"/><rect x="3" y="3" width="1" height="1" fill="#ffff00"/><rect x="4" y="3" width="1" height="1" fill="#fff"/><rect x="5" y="3" width="1" height="1" fill="#ffff00"/><rect x="6" y="3" width="1" height="1" fill="#fff"/><rect x="7" y="3" width="1" height="1" fill="#ffff00"/><rect x="8" y="3" width="1" height="1" fill="#fff"/><rect x="9" y="3" width="4" height="1" fill="#000"/><rect x="0" y="4" width="1" height="1" fill="#000"/><rect x="1" y="4" width="4" height="1" fill="#fff"/><rect x="5" y="4" width="2" height="1" fill="#008080"/><rect x="7" y="4" width="2" height="1" fill="#008000"/><rect x="9" y="4" width="3" height="1" fill="#fff"/><rect x="12" y="4" width="1" height="1" fill="#000"/><rect x="0" y="5" width="1" height="1" fill="#000"/><rect x="1" y="5" width="1" height="1" fill="#ffff00"/><rect x="2" y="5" width="2" height="1" fill="#fff"/><rect x="4" y="5" width="1" height="1" fill="#008080"/><rect x="5" y="5" width="1" height="1" fill="#c0c0c0"/><rect x="6" y="5" width="2" height="1" fill="#0000ff"/><rect x="8" y="5" width="2" height="1" fill="#008000"/><rect x="10" y="5" width="1" height="1" fill="#fff"/><rect x="11" y="5" width="1" height="1" fill="#ffff00"/><rect x="12" y="5" width="1" height="1" fill="#000"/><rect x="0" y="6" width="1" height="1" fill="#000"/><rect x="1" y="6" width="2" height="1" fill="#fff"/><rect x="3" y="6" width="1" height="1" fill="#008080"/><rect x="4" y="6" width="2" height="1" fill="#fff"/><rect x="6" y="6" width="1" height="1" fill="#0000ff"/><rect x="7" y="6" width="1" height="1" fill="#008000"/><rect x="8" y="6" width="3" height="1" fill="#0000ff"/><rect x="11" y="6" width="1" height="1" fill="#fff"/><rect x="12" y="6" width="1" height="1" fill="#000"/><rect x="0" y="7" width="1" height="1" fill="#000"/><rect x="1" y="7" width="1" height="1" fill="#ffff00"/><rect x="2" y="7" width="1" height="1" fill="#fff"/><rect x="3" y="7" width="1" height="1" fill="#008080"/><rect x="4" y="7" width="2" height="1" fill="#fff"/><rect x="6" y="7" width="2" height="1" fill="#008000"/><rect x="8" y="7" width="3" height="1" fill="#0000ff"/><rect x="11" y="7" width="1" height="1" fill="#ffff00"/><rect x="12" y="7" width="1" height="1" fill="#000"/><rect x="0" y="8" width="1" height="1" fill="#000"/><rect x="1" y="8" width="2" height="1" fill="#fff"/><rect x="3" y="8" width="1" height="1" fill="#008080"/><rect x="4" y="8" width="1" height="1" fill="#fff"/><rect x="5" y="8" width="2" height="1" fill="#008000"/><rect x="7" y="8" width="4" height="1" fill="#0000ff"/><rect x="11" y="8" width="1" height="1" fill="#fff"/><rect x="12" y="8" width="1" height="1" fill="#000"/><rect x="0" y="9" width="1" height="1" fill="#000"/><rect x="1" y="9" width="1" height="1" fill="#ffff00"/><rect x="2" y="9" width="1" height="1" fill="#fff"/><rect x="3" y="9" width="3" height="1" fill="#0000ff"/><rect x="6" y="9" width="1" height="1" fill="#008000"/><rect x="7" y="9" width="3" height="1" fill="#0000ff"/><rect x="10" y="9" width="1" height="1" fill="#000080"/><rect x="11" y="9" width="1" height="1" fill="#ffff00"/><rect x="12" y="9" width="1" height="1" fill="#000"/><rect x="0" y="10" width="1" height="1" fill="#000"/><rect x="1" y="10" width="3" height="1" fill="#fff"/><rect x="4" y="10" width="4" height="1" fill="#0000ff"/><rect x="8" y="10" width="2" height="1" fill="#000080"/><rect x="10" y="10" width="2" height="1" fill="#fff"/><rect x="12" y="10" width="1" height="1" fill="#000"/><rect x="0" y="11" width="1" height="1" fill="#000"/><rect x="1" y="11" width="1" height="1" fill="#ffff00"/><rect x="2" y="11" width="1" height="1" fill="#fff"/><rect x="3" y="11" width="1" height="1" fill="#ffff00"/><rect x="4" y="11" width="1" height="1" fill="#fff"/><rect x="5" y="11" width="4" height="1" fill="#000080"/><rect x="9" y="11" width="2" height="1" fill="#fff"/><rect x="11" y="11" width="1" height="1" fill="#ffff00"/><rect x="12" y="11" width="1" height="1" fill="#000"/><rect x="0" y="12" width="1" height="1" fill="#000"/><rect x="1" y="12" width="11" height="1" fill="#fff"/><rect x="12" y="12" width="1" height="1" fill="#000"/><rect x="0" y="13" width="1" height="1" fill="#000"/><rect x="1" y="13" width="1" height="1" fill="#ffff00"/><rect x="2" y="13" width="1" height="1" fill="#fff"/><rect x="3" y="13" width="1" height="1" fill="#ffff00"/><rect x="4" y="13" width="1" height="1" fill="#fff"/><rect x="5" y="13" width="1" height="1" fill="#ffff00"/><rect x="6" y="13" width="1" height="1" fill="#fff"/><rect x="7" y="13" width="1" height="1" fill="#ffff00"/><rect x="8" y="13" width="1" height="1" fill="#fff"/><rect x="9" y="13" width="1" height="1" fill="#ffff00"/><rect x="10" y="13" width="1" height="1" fill="#fff"/><rect x="11" y="13" width="1" height="1" fill="#ffff00"/><rect x="12" y="13" width="1" height="1" fill="#000"/><rect x="0" y="14" width="13" height="1" fill="#000"/></svg>
<svg class="a" style="left:616px;top:60px" width="13" height="15" viewBox="0 0 13 15" shape-rendering="crispEdges"><rect x="0" y="0" width="10" height="1" fill="#000"/><rect x="0" y="1" width="1" height="1" fill="#000"/><rect x="1" y="1" width="1" height="1" fill="#ffff00"/><rect x="2" y="1" width="1" height="1" fill="#fff"/><rect x="3" y="1" width="1" height="1" fill="#ffff00"/><rect x="4" y="1" width="1" height="1" fill="#fff"/><rect x="5" y="1" width="1" height="1" fill="#ffff00"/><rect x="6" y="1" width="1" height="1" fill="#fff"/><rect x="7" y="1" width="1" height="1" fill="#ffff00"/><rect x="8" y="1" width="1" height="1" fill="#fff"/><rect x="9" y="1" width="2" height="1" fill="#000"/><rect x="0" y="2" width="1" height="1" fill="#000"/><rect x="1" y="2" width="8" height="1" fill="#fff"/><rect x="9" y="2" width="1" height="1" fill="#000"/><rect x="10" y="2" width="1" height="1" fill="#fff"/><rect x="11" y="2" width="1" height="1" fill="#000"/><rect x="0" y="3" width="1" height="1" fill="#000"/><rect x="1" y="3" width="1" height="1" fill="#ffff00"/><rect x="2" y="3" width="1" height="1" fill="#fff"/><rect x="3" y="3" width="1" height="1" fill="#ffff00"/><rect x="4" y="3" width="1" height="1" fill="#fff"/><rect x="5" y="3" width="1" height="1" fill="#ffff00"/><rect x="6" y="3" width="1" height="1" fill="#fff"/><rect x="7" y="3" width="1" height="1" fill="#ffff00"/><rect x="8" y="3" width="1" height="1" fill="#fff"/><rect x="9" y="3" width="4" height="1" fill="#000"/><rect x="0" y="4" width="1" height="1" fill="#000"/><rect x="1" y="4" width="4" height="1" fill="#fff"/><rect x="5" y="4" width="2" height="1" fill="#008080"/><rect x="7" y="4" width="2" height="1" fill="#008000"/><rect x="9" y="4" width="3" height="1" fill="#fff"/><rect x="12" y="4" width="1" height="1" fill="#000"/><rect x="0" y="5" width="1" height="1" fill="#000"/><rect x="1" y="5" width="1" height="1" fill="#ffff00"/><rect x="2" y="5" width="2" height="1" fill="#fff"/><rect x="4" y="5" width="1" height="1" fill="#008080"/><rect x="5" y="5" width="1" height="1" fill="#c0c0c0"/><rect x="6" y="5" width="2" height="1" fill="#0000ff"/><rect x="8" y="5" width="2" height="1" fill="#008000"/><rect x="10" y="5" width="1" height="1" fill="#fff"/><rect x="11" y="5" width="1" height="1" fill="#ffff00"/><rect x="12" y="5" width="1" height="1" fill="#000"/><rect x="0" y="6" width="1" height="1" fill="#000"/><rect x="1" y="6" width="2" height="1" fill="#fff"/><rect x="3" y="6" width="1" height="1" fill="#008080"/><rect x="4" y="6" width="2" height="1" fill="#fff"/><rect x="6" y="6" width="1" height="1" fill="#0000ff"/><rect x="7" y="6" width="1" height="1" fill="#008000"/><rect x="8" y="6" width="3" height="1" fill="#0000ff"/><rect x="11" y="6" width="1" height="1" fill="#fff"/><rect x="12" y="6" width="1" height="1" fill="#000"/><rect x="0" y="7" width="1" height="1" fill="#000"/><rect x="1" y="7" width="1" height="1" fill="#ffff00"/><rect x="2" y="7" width="1" height="1" fill="#fff"/><rect x="3" y="7" width="1" height="1" fill="#008080"/><rect x="4" y="7" width="2" height="1" fill="#fff"/><rect x="6" y="7" width="2" height="1" fill="#008000"/><rect x="8" y="7" width="3" height="1" fill="#0000ff"/><rect x="11" y="7" width="1" height="1" fill="#ffff00"/><rect x="12" y="7" width="1" height="1" fill="#000"/><rect x="0" y="8" width="1" height="1" fill="#000"/><rect x="1" y="8" width="2" height="1" fill="#fff"/><rect x="3" y="8" width="1" height="1" fill="#008080"/><rect x="4" y="8" width="1" height="1" fill="#fff"/><rect x="5" y="8" width="2" height="1" fill="#008000"/><rect x="7" y="8" width="4" height="1" fill="#0000ff"/><rect x="11" y="8" width="1" height="1" fill="#fff"/><rect x="12" y="8" width="1" height="1" fill="#000"/><rect x="0" y="9" width="1" height="1" fill="#000"/><rect x="1" y="9" width="1" height="1" fill="#ffff00"/><rect x="2" y="9" width="1" height="1" fill="#fff"/><rect x="3" y="9" width="3" height="1" fill="#0000ff"/><rect x="6" y="9" width="1" height="1" fill="#008000"/><rect x="7" y="9" width="3" height="1" fill="#0000ff"/><rect x="10" y="9" width="1" height="1" fill="#000080"/><rect x="11" y="9" width="1" height="1" fill="#ffff00"/><rect x="12" y="9" width="1" height="1" fill="#000"/><rect x="0" y="10" width="1" height="1" fill="#000"/><rect x="1" y="10" width="3" height="1" fill="#fff"/><rect x="4" y="10" width="4" height="1" fill="#0000ff"/><rect x="8" y="10" width="2" height="1" fill="#000080"/><rect x="10" y="10" width="2" height="1" fill="#fff"/><rect x="12" y="10" width="1" height="1" fill="#000"/><rect x="0" y="11" width="1" height="1" fill="#000"/><rect x="1" y="11" width="1" height="1" fill="#ffff00"/><rect x="2" y="11" width="1" height="1" fill="#fff"/><rect x="3" y="11" width="1" height="1" fill="#ffff00"/><rect x="4" y="11" width="1" height="1" fill="#fff"/><rect x="5" y="11" width="4" height="1" fill="#000080"/><rect x="9" y="11" width="2" height="1" fill="#fff"/><rect x="11" y="11" width="1" height="1" fill="#ffff00"/><rect x="12" y="11" width="1" height="1" fill="#000"/><rect x="0" y="12" width="1" height="1" fill="#000"/><rect x="1" y="12" width="11" height="1" fill="#fff"/><rect x="12" y="12" width="1" height="1" fill="#000"/><rect x="0" y="13" width="1" height="1" fill="#000"/><rect x="1" y="13" width="1" height="1" fill="#ffff00"/><rect x="2" y="13" width="1" height="1" fill="#fff"/><rect x="3" y="13" width="1" height="1" fill="#ffff00"/><rect x="4" y="13" width="1" height="1" fill="#fff"/><rect x="5" y="13" width="1" height="1" fill="#ffff00"/><rect x="6" y="13" width="1" height="1" fill="#fff"/><rect x="7" y="13" width="1" height="1" fill="#ffff00"/><rect x="8" y="13" width="1" height="1" fill="#fff"/><rect x="9" y="13" width="1" height="1" fill="#ffff00"/><rect x="10" y="13" width="1" height="1" fill="#fff"/><rect x="11" y="13" width="1" height="1" fill="#ffff00"/><rect x="12" y="13" width="1" height="1" fill="#000"/><rect x="0" y="14" width="13" height="1" fill="#000"/></svg>
<svg class="a" style="left:473px;top:64px" width="14" height="8" viewBox="0 0 14 8"><path d="M0.500 0.500h13L7 7.500z" fill="#000"/></svg>
<!-- group box -->
<div class="a" style="left:117px;top:122px;width:918px;height:168px;box-sizing:border-box;border:1px solid #fff;border-radius:3px;"></div>
<div class="a" style="left:116px;top:121px;width:920px;height:168px;box-sizing:border-box;border:1px solid #d5dfe5;border-radius:3px;"></div>
<div class="a" style="left:1034px;top:124px;width:1px;height:163px;background:#fff"></div>
<div class="a" style="left:337px;top:153px;width:153px;height:21px;box-sizing:border-box;border:1px solid #646464;background:#f0f0f0"></div>
<div class="a" style="left:337px;top:218px;width:83px;height:21px;box-sizing:border-box;border:1px solid #646464;background:#fff"></div>
<div class="a" style="left:339px;top:220px;width:14px;height:15px;background:#3399ff"></div>
<div class="a" style="left:353px;top:220px;width:1px;height:15px;background:#cc6600"></div>
<div class="a" style="left:420px;top:218px;width:21px;height:21px;box-sizing:border-box;border:1px solid;border-color:#fff #696969 #696969 #fff;background:#f0f0f0;box-shadow:inset -1px -1px 0 #a0a0a0"></div>
<svg class="a" style="left:422px;top:220px" width="15" height="16" viewBox="0 0 15 16" shape-rendering="crispEdges"><rect x="8" y="0" width="1" height="1" fill="#ffff00"/><rect x="10" y="0" width="1" height="1" fill="#ffff00"/><rect x="12" y="0" width="1" height="1" fill="#ffff00"/><rect x="14" y="0" width="1" height="1" fill="#ffff00"/><rect x="7" y="2" width="2" height="1" fill="#000"/><rect x="10" y="2" width="1" height="1" fill="#ffff00"/><rect x="12" y="2" width="1" height="1" fill="#ffff00"/><rect x="14" y="2" width="1" height="1" fill="#ffff00"/><rect x="7" y="3" width="1" height="1" fill="#000"/><rect x="8" y="3" width="1" height="1" fill="#ff0000"/><rect x="9" y="3" width="1" height="1" fill="#000"/><rect x="7" y="4" width="1" height="1" fill="#000"/><rect x="8" y="4" width="2" height="1" fill="#ff0000"/><rect x="10" y="4" width="1" height="1" fill="#000"/><rect x="12" y="4" width="1" height="1" fill="#ffff00"/><rect x="14" y="4" width="1" height="1" fill="#ffff00"/><rect x="6" y="5" width="1" height="1" fill="#000"/><rect x="7" y="5" width="4" height="1" fill="#ff0000"/><rect x="11" y="5" width="1" height="1" fill="#000"/><rect x="6" y="6" width="1" height="1" fill="#000"/><rect x="7" y="6" width="5" height="1" fill="#ff0000"/><rect x="12" y="6" width="1" height="1" fill="#000"/><rect x="14" y="6" width="1" height="1" fill="#ffff00"/><rect x="4" y="7" width="2" height="1" fill="#ff0000"/><rect x="6" y="7" width="1" height="1" fill="#000"/><rect x="7" y="7" width="3" height="1" fill="#ff0000"/><rect x="10" y="7" width="3" height="1" fill="#c00000"/><rect x="13" y="7" width="1" height="1" fill="#000"/><rect x="3" y="8" width="2" height="1" fill="#ff0000"/><rect x="5" y="8" width="1" height="1" fill="#000"/><rect x="6" y="8" width="1" height="1" fill="#fff"/><rect x="7" y="8" width="1" height="1" fill="#000"/><rect x="8" y="8" width="1" height="1" fill="#ff0000"/><rect x="9" y="8" width="2" height="1" fill="#c00000"/><rect x="11" y="8" width="3" height="1" fill="#800000"/><rect x="14" y="8" width="1" height="1" fill="#000"/><rect x="3" y="9" width="1" height="1" fill="#ff0000"/><rect x="4" y="9" width="1" height="1" fill="#000"/><rect x="5" y="9" width="2" height="1" fill="#fff"/><rect x="7" y="9" width="1" height="1" fill="#c0c0c0"/><rect x="8" y="9" width="6" height="1" fill="#000"/><rect x="3" y="10" width="1" height="1" fill="#000"/><rect x="4" y="10" width="2" height="1" fill="#fff"/><rect x="6" y="10" width="1" height="1" fill="#c0c0c0"/><rect x="7" y="10" width="1" height="1" fill="#808080"/><rect x="8" y="10" width="1" height="1" fill="#000"/><rect x="2" y="11" width="1" height="1" fill="#000"/><rect x="3" y="11" width="2" height="1" fill="#fff"/><rect x="5" y="11" width="1" height="1" fill="#c0c0c0"/><rect x="6" y="11" width="1" height="1" fill="#808080"/><rect x="7" y="11" width="1" height="1" fill="#000"/><rect x="1" y="12" width="1" height="1" fill="#000"/><rect x="2" y="12" width="2" height="1" fill="#fff"/><rect x="4" y="12" width="1" height="1" fill="#c0c0c0"/><rect x="5" y="12" width="1" height="1" fill="#808080"/><rect x="6" y="12" width="1" height="1" fill="#000"/><rect x="0" y="13" width="1" height="1" fill="#000"/><rect x="1" y="13" width="2" height="1" fill="#fff"/><rect x="3" y="13" width="1" height="1" fill="#c0c0c0"/><rect x="4" y="13" width="1" height="1" fill="#808080"/><rect x="5" y="13" width="1" height="1" fill="#000"/><rect x="0" y="14" width="1" height="1" fill="#000"/><rect x="1" y="14" width="1" height="1" fill="#fff"/><rect x="2" y="14" width="1" height="1" fill="#c0c0c0"/><rect x="3" y="14" width="1" height="1" fill="#808080"/><rect x="4" y="14" width="1" height="1" fill="#000"/><rect x="1" y="15" width="3" height="1" fill="#000"/></svg>
<!-- grid -->
<div class="a" style="left:115px;top:299px;width:918px;height:359px;box-sizing:border-box;border:1px solid #fbfbfb"></div>
<div class="a" style="left:116px;top:300px;width:916px;height:357px;box-sizing:border-box;background:#a0a0a0;border:1px solid #646464"></div>
<div class="hdr" style="left:117px;width:168px"></div>
<div class="cell" style="left:117px;width:168px"></div>
<div class="hdr" style="left:285px;width:189px"></div>
<div class="cell" style="left:285px;width:189px"></div>
<div class="hdr" style="left:474px;width:133px"></div>
<div class="cell" style="left:474px;width:133px"></div>
<div class="hdr" style="left:607px;width:70px"></div>
<div class="cell" style="left:607px;width:70px"></div>
<div class="hdr" style="left:677px;width:175px"></div>
<div class="cell" style="left:677px;width:175px"></div>
<div class="hdr" style="left:852px;width:84px"></div>
<div class="cell" style="left:852px;width:84px"></div>
<!-- status bar -->
<div class="a" style="left:105px;top:660px;width:949px;height:2px;background:#f6f6f6"></div>
<div class="a" style="left:105px;top:662px;width:949px;height:1px;background:#a8a8a8"></div>
<div class="a" style="left:1053px;top:662px;width:1px;height:2px;background:#808080"></div>
<div class="a" style="left:105px;top:663px;width:948px;height:20px;background:#fff"></div>
<div class="a" style="left:658px;top:664px;width:1px;height:19px;background:#c8c8c8"></div>
<svg class="a" style="left:934px;top:664px" width="27" height="19" viewBox="0 0 27 19" shape-rendering="crispEdges"><rect x="0" y="0" width="9" height="1" fill="#c8c8c8"/><rect x="9" y="0" width="1" height="1" fill="#fff"/><rect x="10" y="0" width="3" height="1" fill="#0000ff"/><rect x="13" y="0" width="1" height="1" fill="#fff"/><rect x="14" y="0" width="1" height="1" fill="#6060ff"/><rect x="15" y="0" width="2" height="1" fill="#fff"/><rect x="17" y="0" width="10" height="1" fill="#c8c8c8"/><rect x="0" y="1" width="8" height="1" fill="#c8c8c8"/><rect x="8" y="1" width="1" height="1" fill="#000080"/><rect x="9" y="1" width="1" height="1" fill="#fff"/><rect x="10" y="1" width="3" height="1" fill="#0000ff"/><rect x="13" y="1" width="1" height="1" fill="#6060ff"/><rect x="14" y="1" width="5" height="1" fill="#fff"/><rect x="19" y="1" width="8" height="1" fill="#c8c8c8"/><rect x="0" y="2" width="6" height="1" fill="#c8c8c8"/><rect x="6" y="2" width="2" height="1" fill="#000080"/><rect x="8" y="2" width="1" height="1" fill="#fff"/><rect x="9" y="2" width="2" height="1" fill="#0000ff"/><rect x="11" y="2" width="1" height="1" fill="#fff"/><rect x="12" y="2" width="2" height="1" fill="#6060ff"/><rect x="14" y="2" width="6" height="1" fill="#fff"/><rect x="20" y="2" width="7" height="1" fill="#c8c8c8"/><rect x="0" y="3" width="6" height="1" fill="#c8c8c8"/><rect x="6" y="3" width="1" height="1" fill="#000080"/><rect x="7" y="3" width="2" height="1" fill="#fff"/><rect x="9" y="3" width="1" height="1" fill="#0000ff"/><rect x="10" y="3" width="2" height="1" fill="#fff"/><rect x="12" y="3" width="1" height="1" fill="#6060ff"/><rect x="13" y="3" width="8" height="1" fill="#fff"/><rect x="21" y="3" width="6" height="1" fill="#c8c8c8"/><rect x="0" y="4" width="5" height="1" fill="#c8c8c8"/><rect x="5" y="4" width="17" height="1" fill="#fff"/><rect x="22" y="4" width="5" height="1" fill="#c8c8c8"/><rect x="0" y="5" width="4" height="1" fill="#c8c8c8"/><rect x="4" y="5" width="2" height="1" fill="#000080"/><rect x="6" y="5" width="1" height="1" fill="#fff"/><rect x="7" y="5" width="2" height="1" fill="#0000ff"/><rect x="9" y="5" width="1" height="1" fill="#fff"/><rect x="10" y="5" width="2" height="1" fill="#6060ff"/><rect x="12" y="5" width="10" height="1" fill="#fff"/><rect x="22" y="5" width="5" height="1" fill="#c8c8c8"/><rect x="0" y="6" width="3" height="1" fill="#c8c8c8"/><rect x="3" y="6" width="3" height="1" fill="#000080"/><rect x="6" y="6" width="1" height="1" fill="#fff"/><rect x="7" y="6" width="2" height="1" fill="#0000ff"/><rect x="9" y="6" width="1" height="1" fill="#fff"/><rect x="10" y="6" width="2" height="1" fill="#6060ff"/><rect x="12" y="6" width="11" height="1" fill="#fff"/><rect x="23" y="6" width="4" height="1" fill="#c8c8c8"/><rect x="0" y="7" width="3" height="1" fill="#c8c8c8"/><rect x="3" y="7" width="3" height="1" fill="#000080"/><rect x="6" y="7" width="1" height="1" fill="#fff"/><rect x="7" y="7" width="2" height="1" fill="#0000ff"/><rect x="9" y="7" width="1" height="1" fill="#fff"/><rect x="10" y="7" width="2" height="1" fill="#6060ff"/><rect x="12" y="7" width="11" height="1" fill="#fff"/><rect x="23" y="7" width="4" height="1" fill="#c8c8c8"/><rect x="0" y="8" width="3" height="1" fill="#c8c8c8"/><rect x="3" y="8" width="3" height="1" fill="#000080"/><rect x="6" y="8" width="1" height="1" fill="#fff"/><rect x="7" y="8" width="2" height="1" fill="#0000ff"/><rect x="9" y="8" width="1" height="1" fill="#fff"/><rect x="10" y="8" width="2" height="1" fill="#6060ff"/><rect x="12" y="8" width="11" height="1" fill="#fff"/><rect x="23" y="8" width="4" height="1" fill="#c8c8c8"/><rect x="0" y="9" width="3" height="1" fill="#c8c8c8"/><rect x="3" y="9" width="20" height="1" fill="#fff"/><rect x="23" y="9" width="4" height="1" fill="#c8c8c8"/><rect x="0" y="10" width="3" height="1" fill="#c8c8c8"/><rect x="3" y="10" width="3" height="1" fill="#000080"/><rect x="6" y="10" width="1" height="1" fill="#fff"/><rect x="7" y="10" width="2" height="1" fill="#0000ff"/><rect x="9" y="10" width="1" height="1" fill="#fff"/><rect x="10" y="10" width="2" height="1" fill="#6060ff"/><rect x="12" y="10" width="11" height="1" fill="#fff"/><rect x="23" y="10" width="4" height="1" fill="#c8c8c8"/><rect x="0" y="11" width="3" height="1" fill="#c8c8c8"/><rect x="3" y="11" width="3" height="1" fill="#000080"/><rect x="6" y="11" width="1" height="1" fill="#fff"/><rect x="7" y="11" width="2" height="1" fill="#0000ff"/><rect x="9" y="11" width="1" height="1" fill="#fff"/><rect x="10" y="11" width="2" height="1" fill="#6060ff"/><rect x="12" y="11" width="11" height="1" fill="#fff"/><rect x="23" y="11" width="4" height="1" fill="#c8c8c8"/><rect x="0" y="12" width="3" height="1" fill="#c8c8c8"/><rect x="3" y="12" width="3" height="1" fill="#000080"/><rect x="6" y="12" width="1" height="1" fill="#fff"/><rect x="7" y="12" width="2" height="1" fill="#0000ff"/><rect x="9" y="12" width="1" height="1" fill="#fff"/><rect x="10" y="12" width="2" height="1" fill="#6060ff"/><rect x="12" y="12" width="11" height="1" fill="#fff"/><rect x="23" y="12" width="4" height="1" fill="#c8c8c8"/><rect x="0" y="13" width="4" height="1" fill="#c8c8c8"/><rect x="4" y="13" width="2" height="1" fill="#000080"/><rect x="6" y="13" width="1" height="1" fill="#fff"/><rect x="7" y="13" width="2" height="1" fill="#0000ff"/><rect x="9" y="13" width="1" height="1" fill="#fff"/><rect x="10" y="13" width="2" height="1" fill="#6060ff"/><rect x="12" y="13" width="10" height="1" fill="#fff"/><rect x="22" y="13" width="5" height="1" fill="#c8c8c8"/><rect x="0" y="14" width="5" height="1" fill="#c8c8c8"/><rect x="5" y="14" width="17" height="1" fill="#fff"/><rect x="22" y="14" width="5" height="1" fill="#c8c8c8"/><rect x="0" y="15" width="6" height="1" fill="#c8c8c8"/><rect x="6" y="15" width="1" height="1" fill="#000080"/><rect x="7" y="15" width="2" height="1" fill="#fff"/><rect x="9" y="15" width="1" height="1" fill="#0000ff"/><rect x="10" y="15" width="2" height="1" fill="#fff"/><rect x="12" y="15" width="1" height="1" fill="#6060ff"/><rect x="13" y="15" width="8" height="1" fill="#fff"/><rect x="21" y="15" width="6" height="1" fill="#c8c8c8"/><rect x="0" y="16" width="6" height="1" fill="#c8c8c8"/><rect x="6" y="16" width="2" height="1" fill="#000080"/><rect x="8" y="16" width="1" height="1" fill="#fff"/><rect x="9" y="16" width="2" height="1" fill="#0000ff"/><rect x="11" y="16" width="1" height="1" fill="#fff"/><rect x="12" y="16" width="2" height="1" fill="#6060ff"/><rect x="14" y="16" width="6" height="1" fill="#fff"/><rect x="20" y="16" width="7" height="1" fill="#c8c8c8"/><rect x="0" y="17" width="8" height="1" fill="#c8c8c8"/><rect x="8" y="17" width="1" height="1" fill="#000080"/><rect x="9" y="17" width="1" height="1" fill="#fff"/><rect x="10" y="17" width="3" height="1" fill="#0000ff"/><rect x="13" y="17" width="1" height="1" fill="#6060ff"/><rect x="14" y="17" width="5" height="1" fill="#fff"/><rect x="19" y="17" width="8" height="1" fill="#c8c8c8"/><rect x="0" y="18" width="9" height="1" fill="#c8c8c8"/><rect x="9" y="18" width="1" height="1" fill="#fff"/><rect x="10" y="18" width="3" height="1" fill="#0000ff"/><rect x="13" y="18" width="1" height="1" fill="#fff"/><rect x="14" y="18" width="1" height="1" fill="#6060ff"/><rect x="15" y="18" width="2" height="1" fill="#fff"/><rect x="17" y="18" width="10" height="1" fill="#c8c8c8"/></svg>
<!-- text -->
<div class="t title" style="left:375.54px;top:3px;transform:scaleX(0.9344);">Installation Workbench - [Package Workbench]</div>
<div class="t m" style="left:35.45px;top:31px;transform:scaleX(0.9950);">File</div>
<div class="t m" style="left:67.06px;top:31px;transform:scaleX(1.0077);">Edit</div>
<div class="t m" style="left:101.58px;top:31px;transform:scaleX(0.9635);">Preferences</div>
<div class="t m" style="left:176.12px;top:31px;transform:scaleX(1.0644);">Form</div>
<div class="t m" style="left:218.69px;top:31px;transform:scaleX(0.9770);">Row</div>
<div class="t m" style="left:255.7px;top:31px;transform:scaleX(1.0396);">Window</div>
<div class="t m" style="left:312.93px;top:31px;transform:scaleX(1.0283);">Help</div>
<div class="t " style="left:36.91px;top:71px;transform:scaleX(0.9954);font-size:13px">Tools</div>
<div class="t " style="left:36.28px;top:91px;transform:scaleX(1.0084);font-size:13px">Form</div>
<div class="t " style="left:37.7px;top:111px;transform:scaleX(0.9832);font-size:13px">Row</div>
<div class="t " style="left:29.46px;top:151px;transform:scaleX(1.1299);color:#fff">Build</div>
<div class="t " style="left:18.89px;top:166px;transform:scaleX(1.0513);color:#fff">Package</div>
<div class="t " style="left:118.73px;top:70px;transform:scaleX(1.0607);">Close</div>
<div class="t dis" style="left:156.69px;top:70px;transform:scaleX(1.0039);">Sequ...</div>
<div class="t " style="left:202.12px;top:70px;transform:scaleX(1.0552);">Ne...</div>
<div class="t " style="left:238.06px;top:70px;transform:scaleX(0.9873);">Prev...</div>
<div class="t dis" style="left:283.83px;top:70px;transform:scaleX(0.9995);">Next</div>
<div class="t " style="left:319.62px;top:70px;transform:scaleX(0.9955);">Con...</div>
<div class="t " style="left:359.6px;top:70px;transform:scaleX(1.0903);">Dis...</div>
<div class="t " style="left:400.04px;top:70px;transform:scaleX(0.9901);">Abo.</div>
<div class="t " style="left:439.44px;top:60px;transform:scaleX(0.9973);">Links</div>
<div class="t " style="left:492.63px;top:61px;transform:scaleX(1.0010);">Previo...</div>
<div class="t " style="left:564.01px;top:61px;transform:scaleX(0.9747);">OLE ...</div>
<div class="t " style="left:633.12px;top:61px;transform:scaleX(1.0412);">Internet</div>
<div class="t " style="left:158.71px;top:154px;transform:scaleX(1.0508);">Plan Name</div>
<div class="t " style="left:339.03px;top:156px;transform:scaleX(1.0213);color:#6d6d6d">TRDUPGPD</div>
<div class="t " style="left:501.21px;top:155px;transform:scaleX(1.0317);">Upgrade Plan for PD920</div>
<div class="t " style="left:155.36px;top:219px;transform:scaleX(1.0322);">New Status</div>
<div class="t " style="left:338.96px;top:221px;transform:scaleX(1.0116);color:#fff">60</div>
<div class="t hb" style="left:176.38px;top:306px;transform:scaleX(1.0379);">Package</div>
<div class="t hb" style="left:183.82px;top:321px;transform:scaleX(1.0323);">Name</div>
<div class="t " style="left:120.21px;top:342px;transform:scaleX(1.0206);color:#fff">PD920FA</div>
<div class="t hb" style="left:354.76px;top:306px;transform:scaleX(1.0378);">Package</div>
<div class="t hb" style="left:347.19px;top:321px;transform:scaleX(0.9954);">Description</div>
<div class="t " style="left:287.76px;top:342px;transform:scaleX(1.0298);color:#fff">Production full package A</div>
<div class="t hb" style="left:527.15px;top:306px;transform:scaleX(1.0409);">Path</div>
<div class="t hb" style="left:527.14px;top:321px;transform:scaleX(0.9505);">Code</div>
<div class="t " style="left:476.9px;top:342px;transform:scaleX(1.0525);color:#fff">PD920</div>
<div class="t hb" style="left:626.25px;top:306px;transform:scaleX(1.0101);">Detail</div>
<div class="t hb" style="left:625.47px;top:321px;transform:scaleX(0.9702);">Status</div>
<div class="t " style="left:611.76px;top:342px;transform:scaleX(0.9658);color:#fff">30</div>
<div class="t hb" style="left:747.55px;top:306px;transform:scaleX(0.9887);">Status</div>
<div class="t hb" style="left:732.21px;top:321px;transform:scaleX(0.9974);">Description</div>
<div class="t " style="left:680.43px;top:342px;transform:scaleX(1.0431);color:#fff">Validated</div>
<div class="t hb" style="left:881.21px;top:306px;transform:scaleX(1.0437);">Date</div>
<div class="t hb" style="left:871.25px;top:321px;transform:scaleX(0.9747);">Updated</div>
<div class="t " style="left:661.51px;top:667px;transform:scaleX(1.0463);">Row:1</div>
</body>
</html>
